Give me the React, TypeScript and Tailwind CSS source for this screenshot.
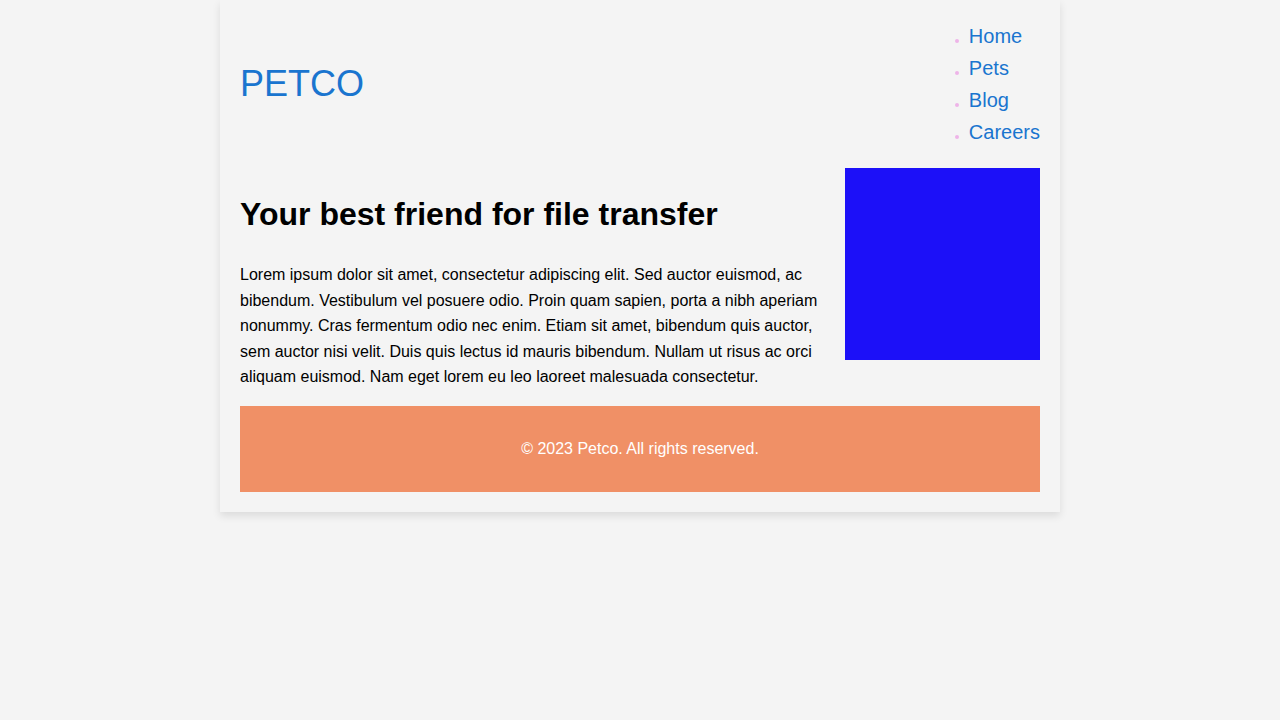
const links = ["Home", "Pets", "Blog", "Careers"];

export default function App() {
  return (
    <div className="min-h-screen bg-[#f4f4f4] font-['Liberation_Sans',Arial,sans-serif] text-base text-black">
      <div className="mx-auto max-w-[840px] p-5 shadow-[0_4px_8px_rgba(0,0,0,0.1)]">
        <header className="flex items-center justify-between pb-5">
          <a href="#" className="text-4xl text-[#1a75cf]">PETCO</a>
          <nav>
            <ul>
              {links.map((label) => (
                <li key={label} className="flex items-baseline gap-2.5 text-xl leading-8">
                  <span className="size-1 rounded-full bg-[#eeb4e8]" />
                  <a href="#" className="text-[#1a75cf]">{label}</a>
                </li>
              ))}
            </ul>
          </nav>
        </header>
        <main className="flex items-start justify-between">
          <section className="max-w-[585px] pb-4">
            <h1 className="pt-[21px] pb-[22px] text-[32px] leading-[51px] font-bold">Your best friend for file transfer</h1>
            <p className="leading-[1.6]">
              Lorem ipsum dolor sit amet, consectetur adipiscing elit. Sed auctor euismod, ac bibendum. Vestibulum vel
              posuere odio. Proin quam sapien, porta a nibh aperiam nonummy. Cras fermentum odio nec enim. Etiam sit
              amet, bibendum quis auctor, sem auctor nisi velit. Duis quis lectus id mauris bibendum. Nullam ut risus ac
              orci aliquam euismod. Nam eget lorem eu leo laoreet malesuada consectetur.
            </p>
          </section>
          <div className="h-48 w-[195px] shrink-0 bg-[#1c10f8]" />
        </main>
        <footer className="bg-[#f09066] py-[30px] text-center text-white">
          <p className="leading-[26px]">© 2023 Petco. All rights reserved.</p>
        </footer>
      </div>
    </div>
  );
}
